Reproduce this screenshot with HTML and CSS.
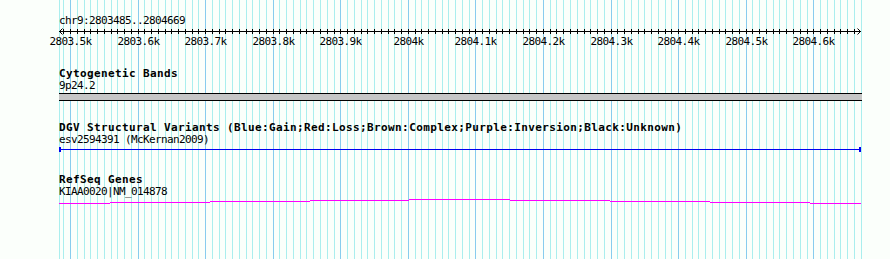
FILE: index.html
```html
<!DOCTYPE html>
<html>

<head>
  <meta charset="utf-8">
  <link rel="stylesheet" href="styles.css">
</head>

<body>
  <div class="browser">
    <svg class="grid" id="grid" width="890" height="259"></svg>

    <div class="ruler">
      <div class="ref">chr9:2803485..2804669</div>
      <svg class="scale" id="scale" width="890" height="21"></svg>
    </div>

    <div class="track">
      <div class="track-title">Cytogenetic Bands</div>
      <div class="label">9p24.2</div>
      <svg class="glyph" width="890" height="10">
        <rect x="59" y="1" width="803" height="8" fill="#000" />
        <rect x="59" y="2" width="803" height="6" fill="#c6c6c6" />
      </svg>
    </div>

    <div class="track">
      <div class="track-title">DGV Structural Variants (Blue:Gain;Red:Loss;Brown:Complex;Purple:Inversion;Black:Unknown)</div>
      <div class="label">esv2594391 (McKernan2009)</div>
      <svg class="glyph" width="890" height="8">
        <g fill="#0000f0">
          <rect x="59" y="3" width="802" height="1" />
          <rect x="59" y="1" width="2" height="5" />
          <rect x="859" y="1" width="2" height="5" />
        </g>
      </svg>
    </div>

    <div class="track">
      <div class="track-title">RefSeq Genes</div>
      <div class="label">KIAA0020|NM_014878</div>
      <svg class="glyph" width="890" height="8">
        <g fill="#ff00ff">
          <rect x="59" y="5" width="51" height="1" />
          <rect x="110" y="4" width="100" height="1" />
          <rect x="210" y="3" width="100" height="1" />
          <rect x="310" y="2" width="99" height="1" />
          <rect x="409" y="1" width="101" height="1" />
          <rect x="510" y="2" width="100" height="1" />
          <rect x="610" y="3" width="100" height="1" />
          <rect x="710" y="4" width="100" height="1" />
          <rect x="810" y="5" width="51" height="1" />
        </g>
      </svg>
    </div>
  </div>

  <script src="script.js"></script>
</body>

</html>
```

FILE: styles.css
```css
body {
  margin: 0;
  background: #fbfffb;
}

.browser {
  position: relative;
  isolation: isolate;
  width: 890px;
  height: 259px;
  box-sizing: border-box;
  padding-top: 15px;
  overflow: hidden;
  background: #fbfffb;
  color: #000;
  font-family: "DejaVu Sans Mono", "Liberation Mono", monospace;
  font-size: 11px;
  line-height: 12px;
  letter-spacing: -0.62px;
}

.grid {
  position: absolute;
  left: 0;
  top: 0;
  z-index: -1;
}

.scale,
.glyph {
  display: block;
}

.ref,
.track-title,
.label {
  height: 12px;
  padding-left: 59px;
  white-space: nowrap;
}

.track-title {
  font-weight: bold;
  letter-spacing: 0.38px;
}

.track {
  margin-top: 20px;
}

.tick-label {
  font-family: "DejaVu Sans Mono", "Liberation Mono", monospace;
  font-size: 11px;
  letter-spacing: -0.62px;
  fill: #000;
}
```

FILE: script.js
```js
// grid lines and ruler for chr9:2803485..2804669
const start = 2803485;
const left = 59.86;
const pxPerBp = 0.6757;
const ns = "http://www.w3.org/2000/svg";

function xpos(bp) {
  return Math.round(left + (bp - start) * pxPerBp);
}

function make(name, attrs, text) {
  const node = document.createElementNS(ns, name);
  for (const k in attrs) node.setAttribute(k, attrs[k]);
  if (text) node.textContent = text;
  return node;
}

const grid = document.getElementById("grid");
const scale = document.getElementById("scale");

grid.appendChild(make("line", { x1: 59.5, x2: 59.5, y1: 0, y2: 259, stroke: "#aaeeee" }));

for (let bp = 2803490; bp <= 2804670; bp += 10) {
  const x = xpos(bp) + 0.5;
  const major = bp % 100 === 0;
  grid.appendChild(make("line", {
    x1: x, x2: x, y1: 0, y2: 259,
    stroke: major ? "#88ccee" : "#aaeeee"
  }));
  if (bp > 2804660) continue;
  scale.appendChild(make("line", { x1: x, x2: x, y1: 2, y2: 7, stroke: "#000" }));
  if (major) {
    scale.appendChild(make("text", {
      x: x, y: 18, "text-anchor": "middle", class: "tick-label"
    }, bp / 1000 + "k"));
  }
}

// axis line and end arrows
scale.appendChild(make("line", { x1: 59, x2: 861, y1: 4.5, y2: 4.5, stroke: "#000" }));
scale.appendChild(make("polyline", { points: "62.5,1.5 59.5,4.5 62.5,7.5", fill: "none", stroke: "#000" }));
scale.appendChild(make("polyline", { points: "857.5,1.5 860.5,4.5 857.5,7.5", fill: "none", stroke: "#000" }));
```
